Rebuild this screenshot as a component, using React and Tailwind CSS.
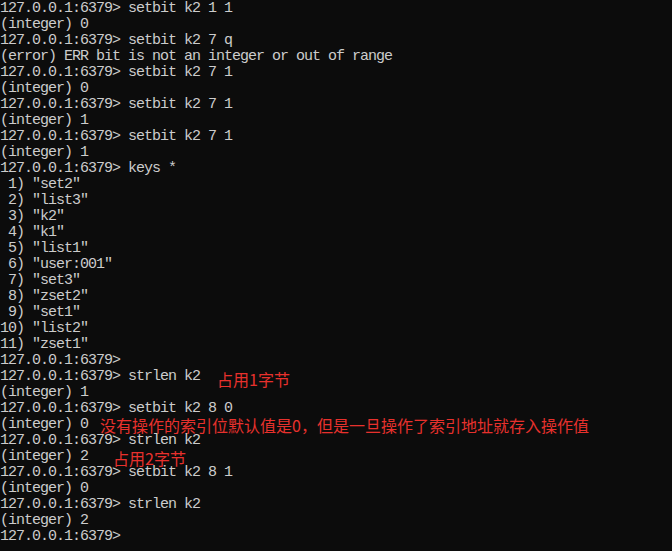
import React from 'react'

const P = '127.0.0.1:6379>'

const lines = [
  [`${P} setbit k2 1 1`],
  ['(integer) 0'],
  [`${P} setbit k2 7 q`],
  ['(error) ERR bit is not an integer or out of range'],
  [`${P} setbit k2 7 1`],
  ['(integer) 0'],
  [`${P} setbit k2 7 1`],
  ['(integer) 1'],
  [`${P} setbit k2 7 1`],
  ['(integer) 1'],
  [`${P} keys *`],
  [' 1) "set2"'],
  [' 2) "list3"'],
  [' 3) "k2"'],
  [' 4) "k1"'],
  [' 5) "list1"'],
  [' 6) "user:001"'],
  [' 7) "set3"'],
  [' 8) "zset2"'],
  [' 9) "set1"'],
  ['10) "list2"'],
  ['11) "zset1"'],
  [P],
  [`${P} strlen k2`, '占用1字节', 'ml-[17px] relative top-[2px]'],
  ['(integer) 1'],
  [`${P} setbit k2 8 0`],
  ['(integer) 0', '没有操作的索引位默认值是0，但是一旦操作了索引地址就存入操作值', 'ml-[12px]'],
  [`${P} strlen k2`],
  ['(integer) 2', '占用2字节', 'ml-[25px] relative top-[1px]'],
  [`${P} setbit k2 8 1`],
  ['(integer) 0'],
  [`${P} strlen k2`],
  ['(integer) 2'],
  [P],
]

export default function App() {
  return (
    <div className="w-[672px] h-[551px] overflow-hidden bg-[#0c0c0c] pt-[1px]">
      {lines.map(([text, note, cls], i) => (
        <div key={i} className="h-4 flex items-center whitespace-pre">
          <span className="font-['Liberation_Mono',monospace] text-[15px] tracking-[-1px] leading-4 text-[#cccccc]">
            {text}
          </span>
          {note && (
            <span className={`font-['Noto_Sans_CJK_SC',sans-serif] text-[16px] leading-4 text-[#e7312d] ${cls}`}>
              {note}
            </span>
          )}
        </div>
      ))}
    </div>
  )
}
